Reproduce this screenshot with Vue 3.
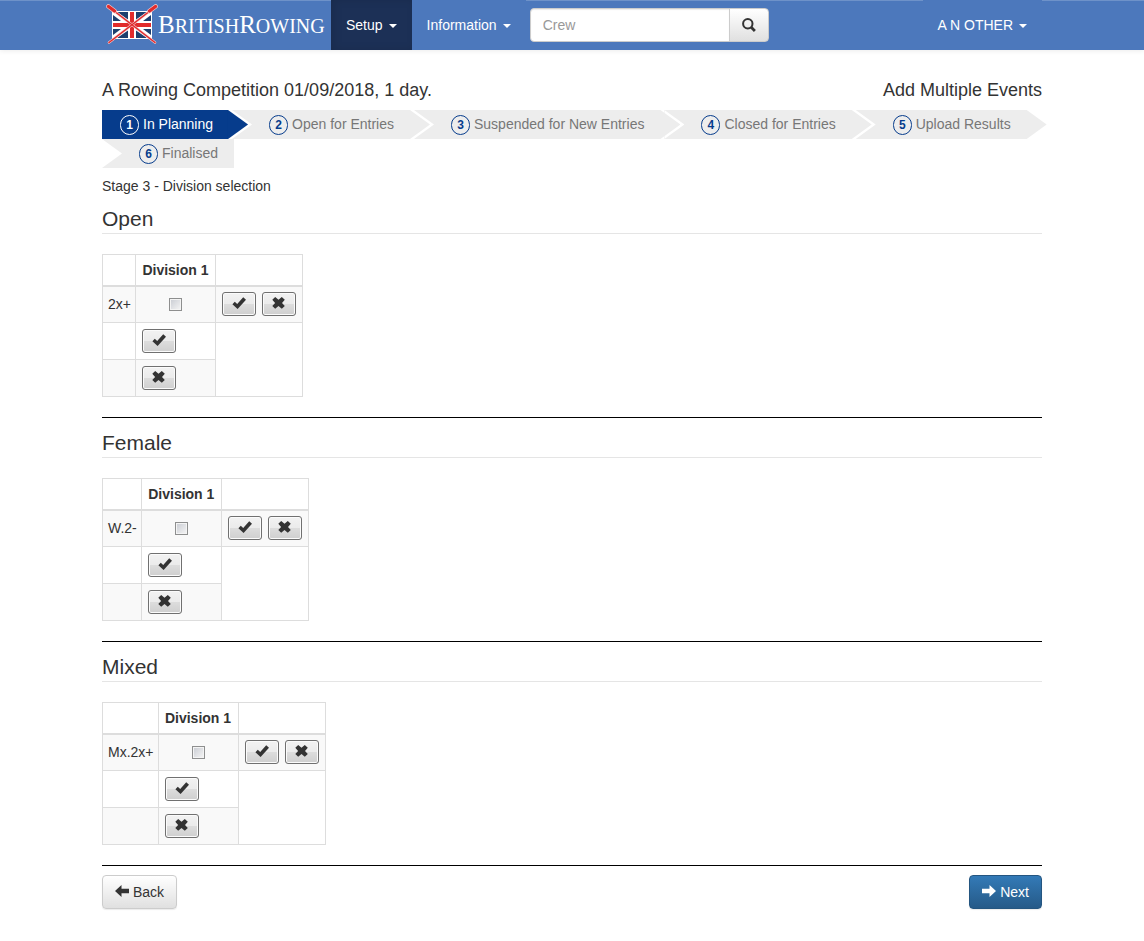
<script setup>
const steps = [
  { n: 1, label: 'In Planning', active: true },
  { n: 2, label: 'Open for Entries' },
  { n: 3, label: 'Suspended for New Entries' },
  { n: 4, label: 'Closed for Entries' },
  { n: 5, label: 'Upload Results' },
  { n: 6, label: 'Finalised' },
]

const groups = [
  { title: 'Open', event: '2x+' },
  { title: 'Female', event: 'W.2-' },
  { title: 'Mixed', event: 'Mx.2x+' },
]

const ok = 'M0.4 8.2 L2.8 5.8 L5.2 8 L11.2 1.2 L14 3.8 L5.6 13 Z'
const remove = 'M3.2 1 L6.500 3.800 L9.800 1 L12.800 3.800 L10 6.900 L12.800 10 L9.800 12.800 L6.500 10 L3.200 12.800 L0.300 10 L3.100 6.900 L0.300 3.800 Z'
</script>

<template>
  <header class="navbar">
    <nav class="container bar">
      <a class="brand" href="#" aria-label="British Rowing">
        <svg class="flag" viewBox="0 0 52 42" aria-hidden="true">
          <rect x="6" y="7" width="40" height="28" fill="#fff" />
          <path d="M11 8H22V15.500ZM30 8H41L30 15.500ZM11 34H22V26.500ZM30 34H41L30 26.500ZM7 11V17H15ZM45 11V17H37ZM7 31V25H15ZM45 31V25H37Z" fill="#1d3f6e" />
          <path d="M7 21H45M26 8V34" stroke="#e02b2c" stroke-width="4" />
          <path d="M3 3L49 38.500M49 3L3 38.500" stroke="#f4c9cc" stroke-width="2.600" stroke-linecap="round" />
          <path d="M3 3L49 38.500M49 3L3 38.500" stroke="#e02b2c" stroke-width="1.500" stroke-linecap="round" />
          <path d="M2.500 2.500L8.500 7M49.500 2.500L43.500 7" stroke="#f4c9cc" stroke-width="4.600" stroke-linecap="round" />
          <path d="M2.500 2.500L8.500 7M49.500 2.500L43.500 7" stroke="#e02b2c" stroke-width="3.400" stroke-linecap="round" />
        </svg>
        <span class="wordmark"><b>B</b>RITISH<b>R</b>OWING</span>
      </a>
      <a class="item current" href="#">Setup <i class="caret"></i></a>
      <a class="item" href="#">Information <i class="caret"></i></a>
      <form class="search" @submit.prevent>
        <input type="text" placeholder="Crew" aria-label="Crew" />
        <button type="submit" aria-label="Search">
          <svg width="14" height="14" viewBox="0 0 14 14" aria-hidden="true">
            <circle cx="5.800" cy="5.800" r="4.700" fill="none" stroke="#333" stroke-width="2" />
            <path d="M9.200 9.200L12.900 12.900" stroke="#333" stroke-width="2.800" />
          </svg>
        </button>
      </form>
      <a class="item user" href="#">A N OTHER <i class="caret"></i></a>
    </nav>
  </header>

  <main class="container">
    <div class="titles">
      <h1>A Rowing Competition 01/09/2018, 1 day.</h1>
      <h2>Add Multiple Events</h2>
    </div>

    <ol class="steps">
      <li v-for="s in steps" :key="s.n" :class="{ active: s.active }">
        <span class="badge">{{ s.n }}</span><span class="label">{{ s.label }}</span>
      </li>
    </ol>

    <p class="stage">Stage 3 - Division selection</p>

    <section v-for="g in groups" :key="g.title">
      <h3>{{ g.title }}</h3>
      <table>
        <thead>
          <tr><th></th><th class="division">Division 1</th><th></th></tr>
        </thead>
        <tbody>
          <tr class="odd first">
            <td class="event">{{ g.event }}</td>
            <td><input type="checkbox" :aria-label="g.event + ' Division 1'" /></td>
            <td>
              <div class="pair">
                <button type="button" class="mini" aria-label="Select row">
                  <svg width="14" height="14" viewBox="0 0 14 14"><path :d="ok" /></svg>
                </button>
                <button type="button" class="mini" aria-label="Clear row">
                  <svg width="14" height="14" viewBox="0 0 14 14"><path :d="remove" /></svg>
                </button>
              </div>
            </td>
          </tr>
          <tr>
            <td></td>
            <td>
              <div class="pair">
                <button type="button" class="mini" aria-label="Select column">
                  <svg width="14" height="14" viewBox="0 0 14 14"><path :d="ok" /></svg>
                </button>
              </div>
            </td>
            <td rowspan="2"></td>
          </tr>
          <tr class="odd">
            <td></td>
            <td>
              <div class="pair">
                <button type="button" class="mini" aria-label="Clear column">
                  <svg width="14" height="14" viewBox="0 0 14 14"><path :d="remove" /></svg>
                </button>
              </div>
            </td>
          </tr>
        </tbody>
      </table>
      <hr />
    </section>

    <div class="actions">
      <button type="button" class="btn">
        <svg width="14" height="14" viewBox="0 0 14 14" aria-hidden="true"><path d="M0 6L6.500 0V3.800H14V8.200H6.500V12Z" fill="#333" /></svg>
        Back
      </button>
      <button type="button" class="btn primary">
        <svg width="14" height="14" viewBox="0 0 14 14" aria-hidden="true"><path d="M14 6L7.500 0V3.800H0V8.200H7.500V12Z" fill="#fff" /></svg>
        Next
      </button>
    </div>
  </main>
</template>

<style>
body {
  background: #fff;
  color: #333;
  font: 14px/20px "Liberation Sans", Arial, sans-serif;
}
</style>

<style scoped>
* { box-sizing: border-box; }
a { color: inherit; text-decoration: none; }
button, input { font: inherit; color: inherit; margin: 0; }
.container { max-width: 970px; margin: 0 auto; padding: 0 15px; }

.navbar {
  background: #4c78bc;
  box-shadow: inset 0 1px 0 #6e92c9, 0 1px 5px rgba(0, 0, 0, 0.08);
}
.bar { display: flex; min-height: 50px; color: #fff; }
.brand { display: flex; align-items: center; width: 229px; padding-left: 4px; }
.flag { width: 52px; height: 42px; flex: none; }
.wordmark { font: 20px/30px "Liberation Serif", serif; white-space: nowrap; }
.wordmark b { font-size: 25px; font-weight: 400; }
.item {
  display: flex;
  align-items: center;
  gap: 6px;
  padding: 0 15px;
  background: #4c78bc;
  white-space: nowrap;
}
.current { background: #1c3056; box-shadow: inset 3px 0 9px rgba(0, 0, 0, 0.1); }
.caret { border: 4px solid transparent; border-top-color: #fff; border-bottom: 0; margin-top: 2px; }
.user { margin-left: auto; }
.search { display: flex; align-items: center; margin-left: 4px; }
.search input {
  width: 200px;
  height: 34px;
  padding: 6px 12px;
  background: #fff;
  border: 1px solid #ccc;
  border-radius: 4px 0 0 4px;
  box-shadow: inset 0 1px 1px rgba(0, 0, 0, 0.08);
  color: #555;
}
.search input::placeholder { color: #999; opacity: 1; }
.search button {
  width: 40px;
  height: 34px;
  margin-left: -1px;
  padding: 0;
  border: 1px solid #ccc;
  border-radius: 0 4px 4px 0;
  background: linear-gradient(#fff, #e0e0e0);
}
.search svg { display: block; margin: 0 auto; }

.titles { display: flex; justify-content: space-between; padding-top: 30px; }
h1, h2 { margin: 0; font-size: 18px; line-height: 20px; font-weight: 400; }

.steps { display: flex; flex-wrap: wrap; gap: 0 4px; margin: 10px 0 8px; padding: 0; list-style: none; }
.steps li {
  position: relative;
  display: flex;
  align-items: flex-start;
  gap: 4px;
  height: 29px;
  padding: 0 16px 0 37px;
  background: #ededed;
  color: #777;
}
.steps li:first-child { padding: 0 15px 0 18px; }
.steps li:not(:first-child)::before {
  content: "";
  position: absolute;
  left: 0;
  top: 0;
  width: 20px;
  height: 100%;
  background: #fff;
  clip-path: polygon(0 0, 100% 50%, 0 100%);
}
.steps li:not(:last-child)::after {
  content: "";
  position: absolute;
  left: calc(100% - 1px);
  top: 0;
  z-index: 1;
  width: 21px;
  height: 100%;
  background: #ededed;
  clip-path: polygon(0 0, 1px 0, 100% 50%, 1px 100%, 0 100%);
}
.steps li.active, .steps li.active:not(:last-child)::after { background: #063c8c; }
.steps li.active { color: #fff; }
.label { line-height: 28px; }
.badge {
  width: 19px;
  height: 20px;
  margin-top: 5px;
  border: 1px solid #063c8c;
  border-radius: 10px;
  color: #063c8c;
  font-size: 12px;
  line-height: 18px;
  font-weight: 700;
  text-align: center;
}
.active .badge { color: #fff; border-color: #fff; }

.stage { margin: 0 0 8px; }
h3 { margin: 0 0 20px; border-bottom: 1px solid #e5e5e5; font-size: 21px; line-height: 29px; font-weight: 400; }

table { border-collapse: collapse; border: 1px solid #ddd; }
th, td { padding: 5px; border: 1px solid #ddd; height: 36px; }
th { height: 31px; border-bottom-width: 2px; }
.division { width: 80px; padding: 5px 0; }
.first td { height: 35px; padding-top: 4px; }
.first .event { padding-right: 4px; }
.odd td { background: #f9f9f9; }
td > input {
  appearance: none;
  display: block;
  width: 13px;
  height: 13px;
  margin: 0 auto;
  border: 1px solid #8e8f8f;
  background: linear-gradient(135deg, #c8cbd2, #f6f6f6);
  box-shadow: inset 0 0 0 1px #f4f4f4;
}
.pair { display: flex; gap: 6px; padding: 1px; }
.mini {
  width: 34px;
  height: 24px;
  padding: 0;
  border: 1px solid #707070;
  border-radius: 3px;
  background: linear-gradient(#f2f2f2, #ebebeb 50%, #dddddd 50%, #cfcfcf);
  box-shadow: inset 0 0 0 1px #fbfbfb;
}
.mini svg { display: block; margin: -2px auto 0; fill: #333; }
hr { margin: 20px 0 10px; border: 0; border-top: 1px solid #000; }

.actions { display: flex; justify-content: space-between; margin-top: -1px; padding-bottom: 32px; }
.btn {
  display: flex;
  align-items: center;
  gap: 4px;
  height: 34px;
  padding: 0 12px;
  border: 1px solid #ccc;
  border-radius: 4px;
  background: linear-gradient(#fff, #e0e0e0);
  box-shadow: 0 1px 1px rgba(0, 0, 0, 0.08);
}
.primary { color: #fff; border-color: #245580; background: linear-gradient(#337ab7, #265a88); }
</style>
